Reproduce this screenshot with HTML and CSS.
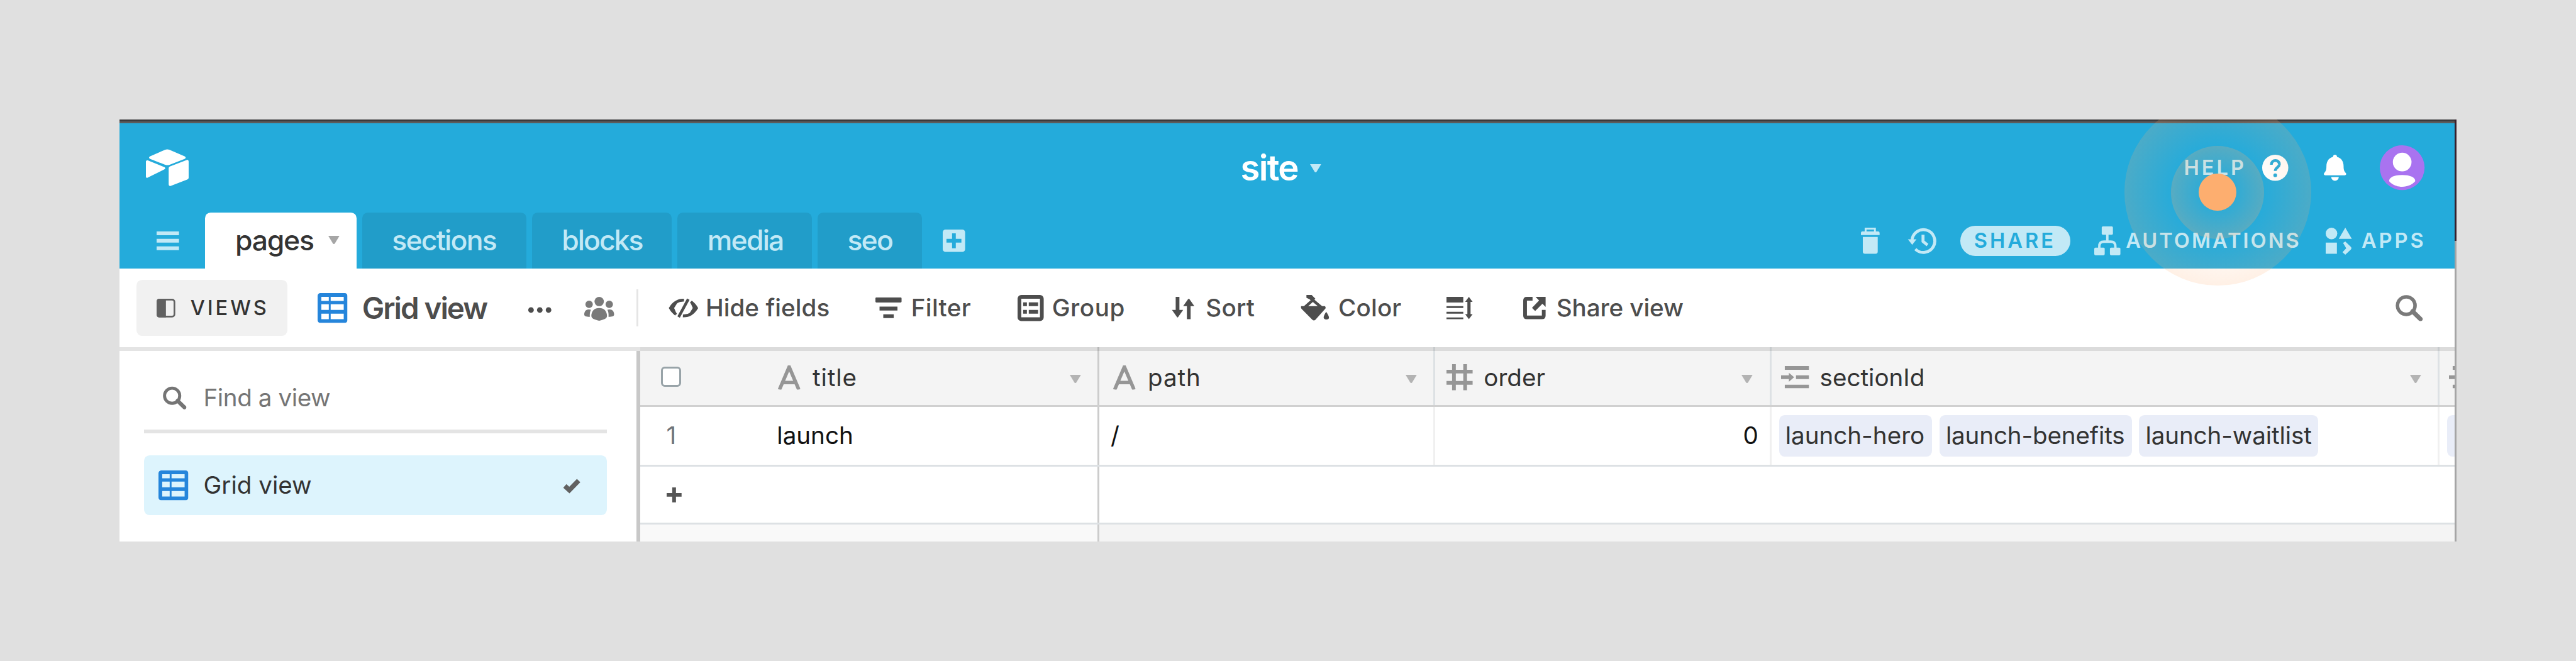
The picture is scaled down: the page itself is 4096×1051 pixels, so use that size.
FILE: index.html
```html
<!DOCTYPE html>
<html lang="en">
<head>
<meta charset="utf-8">
<title>site</title>
<link rel="stylesheet" href="styles.css">
</head>
<body>
<svg width="0" height="0" class="defs">
  <symbol id="caret" viewBox="0 0 6 4.4"><path d="M0 0H6L3.5 4.1Q3 4.7 2.5 4.1Z"/></symbol>
  <symbol id="gridview" viewBox="0 0 16 16"><path fill-rule="evenodd" d="M1.5 0h13A1.5 1.5 0 0 1 16 1.5v13a1.5 1.5 0 0 1-1.5 1.5h-13A1.5 1.5 0 0 1 0 14.5v-13A1.5 1.5 0 0 1 1.5 0zM2 2v2.2h4V2zM7 2v2.2h7V2zM2 6v3h4V6zM7 6v3h7V6zM2 11v3h4v-3zM7 11v3h7v-3z"/></symbol>
  <symbol id="text" viewBox="0 0 12 13"><path d="M.8 13 6 .8 11.2 13M2.6 9.2H9.4" fill="none" stroke="currentColor" stroke-width="1.9"/></symbol>
  <symbol id="link" viewBox="0 0 15 12"><path d="M2 0h13v2H2zM8 5h7v2H8zM2 10h13v2H2zM0 5h4.2V3.6L7 6 4.2 8.4V7H0z"/></symbol>
  <symbol id="search" viewBox="0 0 15 14"><circle cx="6.1" cy="5.7" r="4.7" fill="none" stroke="currentColor" stroke-width="1.9"/><path d="m9.5 8.8 4.2 4.1" fill="none" stroke="currentColor" stroke-width="2.4" stroke-linecap="round"/></symbol>
</svg>

<div class="window">
  <header class="top">
    <svg class="logo" viewBox="0 0 23 20" width="2.3rem" height="2rem"><path d="M10.2.4 2.3 3.9c-.8.4-.8 1 0 1.400l8 3.100c.8.300 1.600.300 2.400 0l8-3.100c.8-.4.8-1 0-1.400L12.700.4c-.8-.35-1.700-.35-2.500 0zM12.200 10.300v8.500c0 .8.5 1.200 1.200.9l8.700-3.400c.5-.2.8-.5.8-1V6.700c0-.7-.5-1-1.100-.8L13 9.300c-.5.200-.8.5-.8 1zM9.900 10.900.9 15.300c-.5.200-.9 0-.9-.5V6.700c0-.5.500-.8 1-.6l8.900 3.600c.6.300.6.900 0 1.200z"/></svg>
    <h1 class="base">site <svg width=".6rem" height=".44rem"><use href="#caret"/></svg></h1>
    <div class="account">
      <span class="help">HELP</span>
      <svg viewBox="0 0 14 14" width="1.4rem" height="1.4rem"><circle cx="7" cy="7" r="7"/><path d="M4.900 5.400C4.900 2.400 9.300 2.400 9.200 5.200 9.100 6.800 7 6.900 7 8.700" fill="none" stroke="#22abdb" stroke-width="1.500"/><circle cx="7" cy="11" r="1" fill="#22abdb"/></svg>
      <svg class="bell" viewBox="0 0 12 14" width="1.2rem" height="1.4rem"><path d="M6 0c.7 0 1.100.5 1.100 1.200C9.700 1.900 10.600 4 10.600 6.200c0 2 .4 2.700 1.100 3.500.6.700.2 1.300-.5 1.300H.8C.1 11-.3 10.400.3 9.700 1 8.900 1.400 8.200 1.400 6.200 1.400 4 2.300 1.900 4.900 1.200 4.900.5 5.300 0 6 0zM4 12h4c0 2.600-4 2.600-4 0z"/></svg>
      <svg class="avatar" viewBox="0 0 24 24" width="2.4rem" height="2.4rem"><circle cx="12" cy="12" r="12" fill="#a973f0"/><ellipse cx="12" cy="9" rx="5" ry="5"/><path d="M5 19.200c0-2.200 3-3.300 7-3.300s7 1.100 7 3.300c-1.500 1.900-4.200 3-7 3s-5.500-1.100-7-3z"/></svg>
    </div>
  </header>

  <nav class="tabs">
    <svg class="menu" viewBox="0 0 12 10" width="1.2rem" height="1rem"><path d="M0 0h12v2H0zM0 4h12v2H0zM0 8h12v2H0z"/></svg>
    <div class="tab active">pages <svg width=".6rem" height=".44rem"><use href="#caret"/></svg></div>
    <div class="tab sections">sections</div>
    <div class="tab blocks">blocks</div>
    <div class="tab media">media</div>
    <div class="tab seo">seo</div>
    <svg class="add" viewBox="0 0 12 12" width="1.2rem" height="1.2rem"><path fill-rule="evenodd" d="M1.500 0h9A1.500 1.500 0 0 1 12 1.500v9a1.500 1.500 0 0 1-1.500 1.500h-9A1.500 1.500 0 0 1 0 10.500v-9A1.500 1.500 0 0 1 1.500 0zM5 2v3H2v2h3v3h2V7h3V5H7V2z"/></svg>
    <div class="tools">
      <svg viewBox="0 0 10 14" width="1rem" height="1.4rem"><path d="M2.500 2.200V.5h5v1.700" fill="none" stroke="currentColor"/><path d="M.8 2h8.400q.8 0 .8.8V4H0V2.800Q0 2 .8 2zM1 5h8v7.800q0 1.200-1.200 1.200H2.200Q1 14 1 12.800z"/></svg>
      <svg class="history" viewBox="0 0 15 14" width="1.5rem" height="1.4rem"><path d="M2.100 7.200A6.100 6.100 0 1 1 3.900 11.500M8 3.800v3.600l2.400 1.900" fill="none" stroke="currentColor" stroke-width="1.600"/><path d="M-.1 6.200h4.600L2.200 9.200z"/></svg>
      <span class="share">SHARE</span>
      <svg class="flow" viewBox="0 0 14 16" width="1.4rem" height="1.6rem"><path d="M7 4v4M2.700 12.500V11Q2.700 8.500 5.200 8.500h3.600Q11.300 8.500 11.300 11v1.500" fill="none" stroke="currentColor" stroke-width="1.300"/><rect x="4" y=".3" width="6" height="4.500" rx=".6"/><rect x="0" y="11.700" width="5.600" height="4.100" rx=".6"/><rect x="8.400" y="11.700" width="5.600" height="4.100" rx=".6"/></svg>
      <span class="automations">AUTOMATIONS</span>
      <svg viewBox="0 0 14 14" width="1.4rem" height="1.4rem"><circle cx="3.100" cy="3.100" r="3.100"/><path d="M10.500 0 14 6H7zM0 8h6v6H0zM9.300 8.200 10.500 7.400l2.900 2.800q.8.800 0 1.600l-2.900 2.700-1.500-1.400 2-2.100z"/></svg>
      <span class="apps">APPS</span>
    </div>
  </nav>

  <div class="toolbar">
    <div class="views"><svg viewBox="0 0 10 10" width="1rem" height="1rem"><rect x=".45" y=".45" width="9.100" height="9.100" rx="1.200" fill="none" stroke="currentColor" stroke-width=".9"/><path d="M0 1.500Q0 0 1.500 0H5v10H1.500Q0 10 0 8.500z"/></svg><span>VIEWS</span></div>
    <div class="viewname"><svg width="1.6rem" height="1.6rem"><use href="#gridview"/></svg><span>Grid view</span></div>
    <svg viewBox="0 0 13 4" width="1.3rem" height=".4rem" class="dots"><circle cx="1.800" cy="2" r="1.500"/><circle cx="6.500" cy="2" r="1.500"/><circle cx="11.200" cy="2" r="1.500"/></svg>
    <svg class="people" viewBox="0 0 16 13" width="1.6rem" height="1.3rem"><circle cx="8" cy="2.500" r="2.500"/><circle cx="2.600" cy="4" r="2"/><circle cx="13.400" cy="4" r="2"/><path d="M3.800 10.400C3.800 7.500 5.500 6 8 6s4.200 1.500 4.200 4.400Q12.200 12 8 12.800 3.800 12 3.800 10.400zM3.600 6.900C3 8 2.900 9.300 3 10.700 1 10.700 0 10.300 0 9.500 0 7.600 1 6.700 2.400 6.700q.7 0 1.200.2zM12.400 6.900C13 8 13.100 9.300 13 10.700c2 0 3-.4 3-1.200 0-1.900-1-2.800-2.400-2.800q-.7 0-1.200.2z"/></svg>
    <i class="sep"></i>
    <div class="item hide"><svg viewBox="0 0 16 10" width="1.6rem" height="1rem"><path d="M8.300.8C4.500.6 2.500 2.600 1 5q1 1.900 3 3.400M7.700 9.200C11.500 9.400 13.500 7.400 15 5q-1-1.900-3-3.400M10.600.2 5.400 9.800" fill="none" stroke="currentColor" stroke-width="1.500"/><path d="M1 5Q2.500 2 5.500 1L3 5l1.500 3.500Q2 7.500 1 5zM15 5q-1.500 3-4.500 4L13 5l-1.500-3.500Q14 2.500 15 5z"/></svg><span>Hide fields</span></div>
    <div class="item filter"><svg viewBox="0 0 14 11" width="1.4rem" height="1.1rem"><path d="M.5 0h13q.5 0 .5.500v1.700q0 .5-.5.500H.5Q0 2.700 0 2.200V.5Q0 0 .5 0zM2.200 4.900h9.600V7H2.200zM4.200 9h5.600v2H4.200z"/></svg><span>Filter</span></div>
    <div class="item group"><svg viewBox="0 0 14 14" width="1.4rem" height="1.4rem"><rect x="1" y="1" width="12" height="12" rx="1" fill="none" stroke="currentColor" stroke-width="2"/><path d="M3 4h2v2H3zM6 4h5v2H6zM3 8h2v2H3zM6 8h5v2H6z"/></svg><span>Group</span></div>
    <div class="item sort"><svg viewBox="0 0 13 12" width="1.3rem" height="1.2rem"><path d="M2.500 0h2v7h2L3.900 10.700q-.4.600-.8 0L.5 7h2zM8.500 12h2V5h2L9.900 1.300q-.4-.6-.8 0L6.500 5h2z"/></svg><span>Sort</span></div>
    <div class="item color"><svg viewBox="0 0 15 14" width="1.500rem" height="1.4rem"><path d="M4 .9 11.800 7.500M6.700 2.300 1.600 6.900" fill="none" stroke="currentColor" stroke-width="1.500"/><path d="M2.800 0h2.800l2 2-1.200 1.200L2.800 1.500zM0 6h12.700q.8.800 0 1.600L7.600 13.300q-.8.700-1.600 0L.4 7.700Q-.4 6.800 0 6zM13.400 9c1.900 2.700 2 4.100.1 4.100-2 0-1.900-1.400-.1-4.100z"/></svg><span>Color</span></div>
    <svg class="height" viewBox="0 0 14 12" width="1.4rem" height="1.2rem"><path d="M0 0h9v3H0zM0 5h9v1H0zM0 8h9v1H0zM0 11h9v1H0zM11.200 1.500h1.700v9h-1.700z"/><path d="M12 0 14 2.700H10zM12 12l2-2.700H10z"/></svg>
    <div class="item shareview"><svg viewBox="0 0 12 12" width="1.2rem" height="1.2rem"><path d="M5 1H2Q1 1 1 2v8q0 1 1 1h8q1 0 1-1V7" fill="none" stroke="currentColor" stroke-width="2"/><path d="M6.600 0H12v5.400L10.300 3.700 6.400 7.600 4.700 5.900 8.500 1.900z"/></svg><span>Share view</span></div>
    <svg class="find" width="1.5rem" height="1.4rem"><use href="#search"/></svg>
  </div>

  <main>
    <aside>
      <div class="findview"><svg width="1.3rem" height="1.250rem"><use href="#search"/></svg><span>Find a view</span></div>
      <div class="selected"><svg class="gv" width="1.6rem" height="1.6rem"><use href="#gridview"/></svg><span>Grid view</span><svg class="check" viewBox="0 0 9 7" width=".95rem" height=".74rem"><path d="m1 3.700 2.300 2.100L8 1" fill="none" stroke="currentColor" stroke-width="2.400"/></svg></div>
    </aside>
    <section class="grid">
      <div class="row head">
        <div class="cell c1"><i class="box"></i><b class="slot a"><svg width="1.200rem" height="1.3rem"><use href="#text"/></svg></b><span class="wide">title</span><svg class="caret" width=".6rem" height=".44rem"><use href="#caret"/></svg></div>
        <div class="cell"><b class="slot a"><svg width="1.200rem" height="1.3rem"><use href="#text"/></svg></b><span class="wide">path</span><svg class="caret" width=".6rem" height=".44rem"><use href="#caret"/></svg></div>
        <div class="cell"><b class="slot n"><svg viewBox="0 0 14 14" width="1.4rem" height="1.4rem"><path d="M4 0v14M10 0v14M0 4h14M0 10h14" fill="none" stroke="currentColor" stroke-width="2"/></svg></b><span>order</span><svg class="caret" width=".6rem" height=".44rem"><use href="#caret"/></svg></div>
        <div class="cell"><b class="slot"><svg width="1.5rem" height="1.2rem"><use href="#link"/></svg></b><span>sectionId</span><svg class="caret" width=".6rem" height=".44rem"><use href="#caret"/></svg></div>
        <div class="cell last"><b class="slot"><svg width="1.5rem" height="1.2rem"><use href="#link"/></svg></b></div>
      </div>
      <div class="row data">
        <div class="cell c1"><span class="num">1</span><span>launch</span></div>
        <div class="cell">/</div>
        <div class="cell right">0</div>
        <div class="cell chips"><span class="hero">launch-hero</span><span class="benefits">launch-benefits</span><span class="waitlist">launch-waitlist</span></div>
        <div class="cell chips last"><span class="hero"></span></div>
      </div>
      <div class="row new">
        <div class="cell c1"><svg viewBox="0 0 8 8" width=".8rem" height=".8rem"><path d="M3 0h2v3h3v2H5v3H3V5H0V3h3z"/></svg></div>
        <div class="rest"></div>
      </div>
      <div class="row foot"><div class="cell c1"></div><div class="rest"></div></div>
    </section>
  </main>
  <div class="ripple outer"></div>
  <div class="ripple inner"></div>
  <div class="ripple dot"></div>
</div>
</body>
</html>
```
FILE: styles.css
```css
/* 138rem spans the viewport, so 0.1rem is one design pixel */
html { font-size: calc(100vw / 138); }
* { box-sizing: border-box; }
body { margin: 0; height: 100vh; overflow: hidden; background: #e0e0e0; font-family: Inter, "Liberation Sans", sans-serif; font-size: 1.3rem; line-height: 1.6rem; display: flex; }
.defs { position: absolute; }
svg { display: block; flex: none; fill: currentColor; overflow: visible; }
span, h1 { white-space: nowrap; }

.window { position: relative; width: 125.2rem; height: 22.6rem; margin: 6.4rem 0 0 6.4rem; padding-right: .1rem; overflow: hidden; background: #fff; display: flex; flex-direction: column; }
.window::before { content: ""; flex: none; height: .2rem; background: linear-gradient(#3a3a3c 50%, #5c5c5c 50%); }
.window::after { content: ""; position: absolute; right: 0; top: 0; width: .1rem; height: 100%; background: linear-gradient(#37202c 6.5rem, #a5a5a5 6.5rem); }

.top { flex: none; height: 4.8rem; background: #24abdb; color: #fff; display: grid; grid-template-columns: 60.06rem 1fr auto; align-items: center; }
.logo { margin-left: 1.4rem; }
.base { margin: 0; font-size: 1.9rem; line-height: 2.4rem; font-weight: 600; letter-spacing: -.06rem; display: flex; align-items: center; gap: .65rem; }
.base svg { color: #c2e9f6; }
.account { display: flex; align-items: center; padding-right: 1.6rem; }
.help { width: 4.21rem; font-size: 1.1rem; font-weight: 600; letter-spacing: .135rem; color: #c2e9f6; }
.bell { margin-left: 1.9rem; }
.avatar { margin-left: 1.8rem; }

.tabs { flex: none; height: 3rem; background: #24abdb; color: #c2e9f6; display: flex; align-items: center; padding-left: 2rem; }
.menu { margin-right: 1.4rem; }
.tab { height: 3rem; margin-right: .3rem; padding-left: 1.6rem; border-radius: .3rem .3rem 0 0; background: #219dc9; font-size: 1.5rem; font-weight: 500; letter-spacing: -.06rem; display: flex; align-items: center; }
.active { width: 8.1rem; padding-right: .9rem; background: #fff; color: #333; letter-spacing: -.042rem; justify-content: space-between; }
.active svg { color: #a6a6a6; margin-top: -.1rem; }
.sections { width: 8.8rem; }
.blocks { width: 7.5rem; letter-spacing: -.068rem; }
.media { width: 7.2rem; }
.seo { width: 5.6rem; }
.add { margin-left: .8rem; }
.tools { margin-left: auto; display: flex; align-items: center; font-size: 1.1rem; font-weight: 600; }
.history { margin: 0 1.3rem 0 1.5rem; }
.share { width: 5.9rem; height: 1.6rem; margin-right: 1.3rem; padding-left: .75rem; border-radius: .8rem; background: #c2e9f6; color: #24abdb; letter-spacing: .134rem; }
.automations { width: 10.72rem; margin-left: .28rem; letter-spacing: .102rem; }
.apps { width: 4.99rem; margin-left: .51rem; letter-spacing: .13rem; }

.toolbar { flex: none; height: 4.2rem; color: #4d4d4d; font-weight: 500; display: grid; grid-template-columns: 9.7rem 11.27rem 3.03rem 2.8rem 1.7rem 11.1rem 7.6rem 8.25rem 6.95rem 7.8rem 4.1rem 1fr auto; align-items: center; padding: 0 1.7rem 0 .9rem; }
.views { width: 8.1rem; height: 3rem; border-radius: .3rem; padding-left: 1.1rem; background: #f1f1f1; color: #333; font-size: 1.1rem; letter-spacing: .132rem; display: flex; align-items: center; gap: .8rem; }
.views svg { color: #616161; }
.viewname { display: flex; align-items: center; gap: .8rem; font-size: 1.6rem; font-weight: 600; letter-spacing: -.068rem; }
.viewname svg, .gv { color: #2585db; }
.dots { margin-top: .2rem; }
.people { color: #7a7a7a; margin-top: .1rem; }
.sep { width: .1rem; height: 2rem; background: #e5e5e5; }
.item { display: flex; align-items: center; gap: .4rem; }
.hide { letter-spacing: .002rem; }
.filter { gap: .51rem; letter-spacing: .013rem; }
.group { gap: .46rem; letter-spacing: .018rem; }
.sort { gap: .55rem; letter-spacing: .007rem; }
.sort, .color { letter-spacing: .006rem; }
.color { gap: .5rem; }
.shareview { gap: .58rem; letter-spacing: -.003rem; }
.find { color: #7a7a7a; }

main { flex: 1; display: flex; min-height: 0; }
aside { width: 27.9rem; border-top: 6px solid #e4e4e4; padding: 0 1.6rem 0 1.3rem; position: relative; }
aside::after { content: ""; position: absolute; right: 0; top: 0; width: .2rem; height: 100%; background: #c8c8c8; }
.findview { width: 24.8rem; height: 4.4rem; padding: .84rem 0 0 1rem; border-bottom: 6px solid #e4e4e4; color: #757575; display: flex; align-items: center; gap: .9rem; letter-spacing: -.014rem; }
.selected { width: 24.8rem; height: 3.2rem; margin-top: 1.2rem; padding: 0 1.4rem 0 .8rem; border-radius: .3rem; background: #ddf4fd; color: #333; display: flex; align-items: center; }
.selected span { margin-left: .8rem; }
.check { margin-left: auto; color: #616161; }

.grid { flex: 1; min-width: 0; display: flex; flex-direction: column; position: relative; overflow: hidden; }
.grid::after { content: ""; position: absolute; left: 0; top: 0; width: 100%; height: .2rem; background: rgba(0, 0, 0, .1); }
.row { flex: none; display: grid; grid-template-columns: 24.6rem 18rem 18rem 35.8rem .8rem; border-bottom: 3px solid #dde1e4; }
.cell { display: flex; align-items: center; min-width: 0; overflow: hidden; border-right: 3px solid #f0f0f0; padding: 0 .9rem 0 .5rem; }
.row .c1 { border-right-color: #ccc; padding-left: 1.1rem; }
.row .last { border-right: 0; padding-right: 0; }
.head { height: 3.2rem; background: #f4f4f4; border-color: #d0d0d0; color: #333; }
.head .cell { padding-top: .17rem; border-right-color: #dde1e4; }
.head .c1 { border-right-color: #ccc; }
.box { width: 1.1rem; height: 1.1rem; border: 3px solid #98a3a8; border-radius: .2rem; background: #fff; margin: -.1rem 4.94rem 0 0; }
.slot { width: 2.09rem; flex: none; color: #969696; }
.slot svg { margin-top: -.04rem; }
.a { padding-left: .25rem; }
.n { padding-left: .1rem; }
.wide { letter-spacing: .03rem; }
.caret { margin: .13rem 0 0 auto; color: #b3b3b3; }
.data { height: 3.2rem; color: #111; }
.data .cell:nth-child(2) { padding-left: .6rem; }
.num { width: 6.22rem; padding-left: .3rem; color: #6f7378; }
.data .right { justify-content: flex-end; padding-right: .6rem; }
.data .chips { padding-left: .4rem; gap: .4rem; }
.chips span { flex: none; height: 2.2rem; padding-left: .34rem; border-radius: .3rem; background: #e9edf8; color: #333; line-height: 2.2rem; }
.hero { width: 8.2rem; }
.benefits { width: 10.3rem; letter-spacing: -.005rem; }
.waitlist { width: 9.600rem; letter-spacing: -.004rem; }
.new { height: 3.1rem; }
.new .c1 { padding-left: 1.4rem; color: #555; }
.rest { grid-column: 2 / -1; }
.foot { flex: 1; border: 0; background: #f4f4f4; }
.foot .c1 { background: #f9f9f9; }

/* Click indicator */
.ripple { position: absolute; border-radius: 50%; }
.outer { width: 10rem; height: 10rem; left: 107.4rem; top: -1.1rem; background: radial-gradient(closest-side, rgba(255, 173, 112, 0) 45%, rgba(255, 173, 112, .18) 100%); }
.inner { width: 5rem; height: 5rem; left: 109.900rem; top: 1.4rem; background: radial-gradient(closest-side, rgba(255, 173, 112, .03) 30%, rgba(255, 173, 112, .23) 100%); }
.dot { width: 2rem; height: 2rem; left: 111.400rem; top: 2.9rem; background: #fdae6f; }
```
